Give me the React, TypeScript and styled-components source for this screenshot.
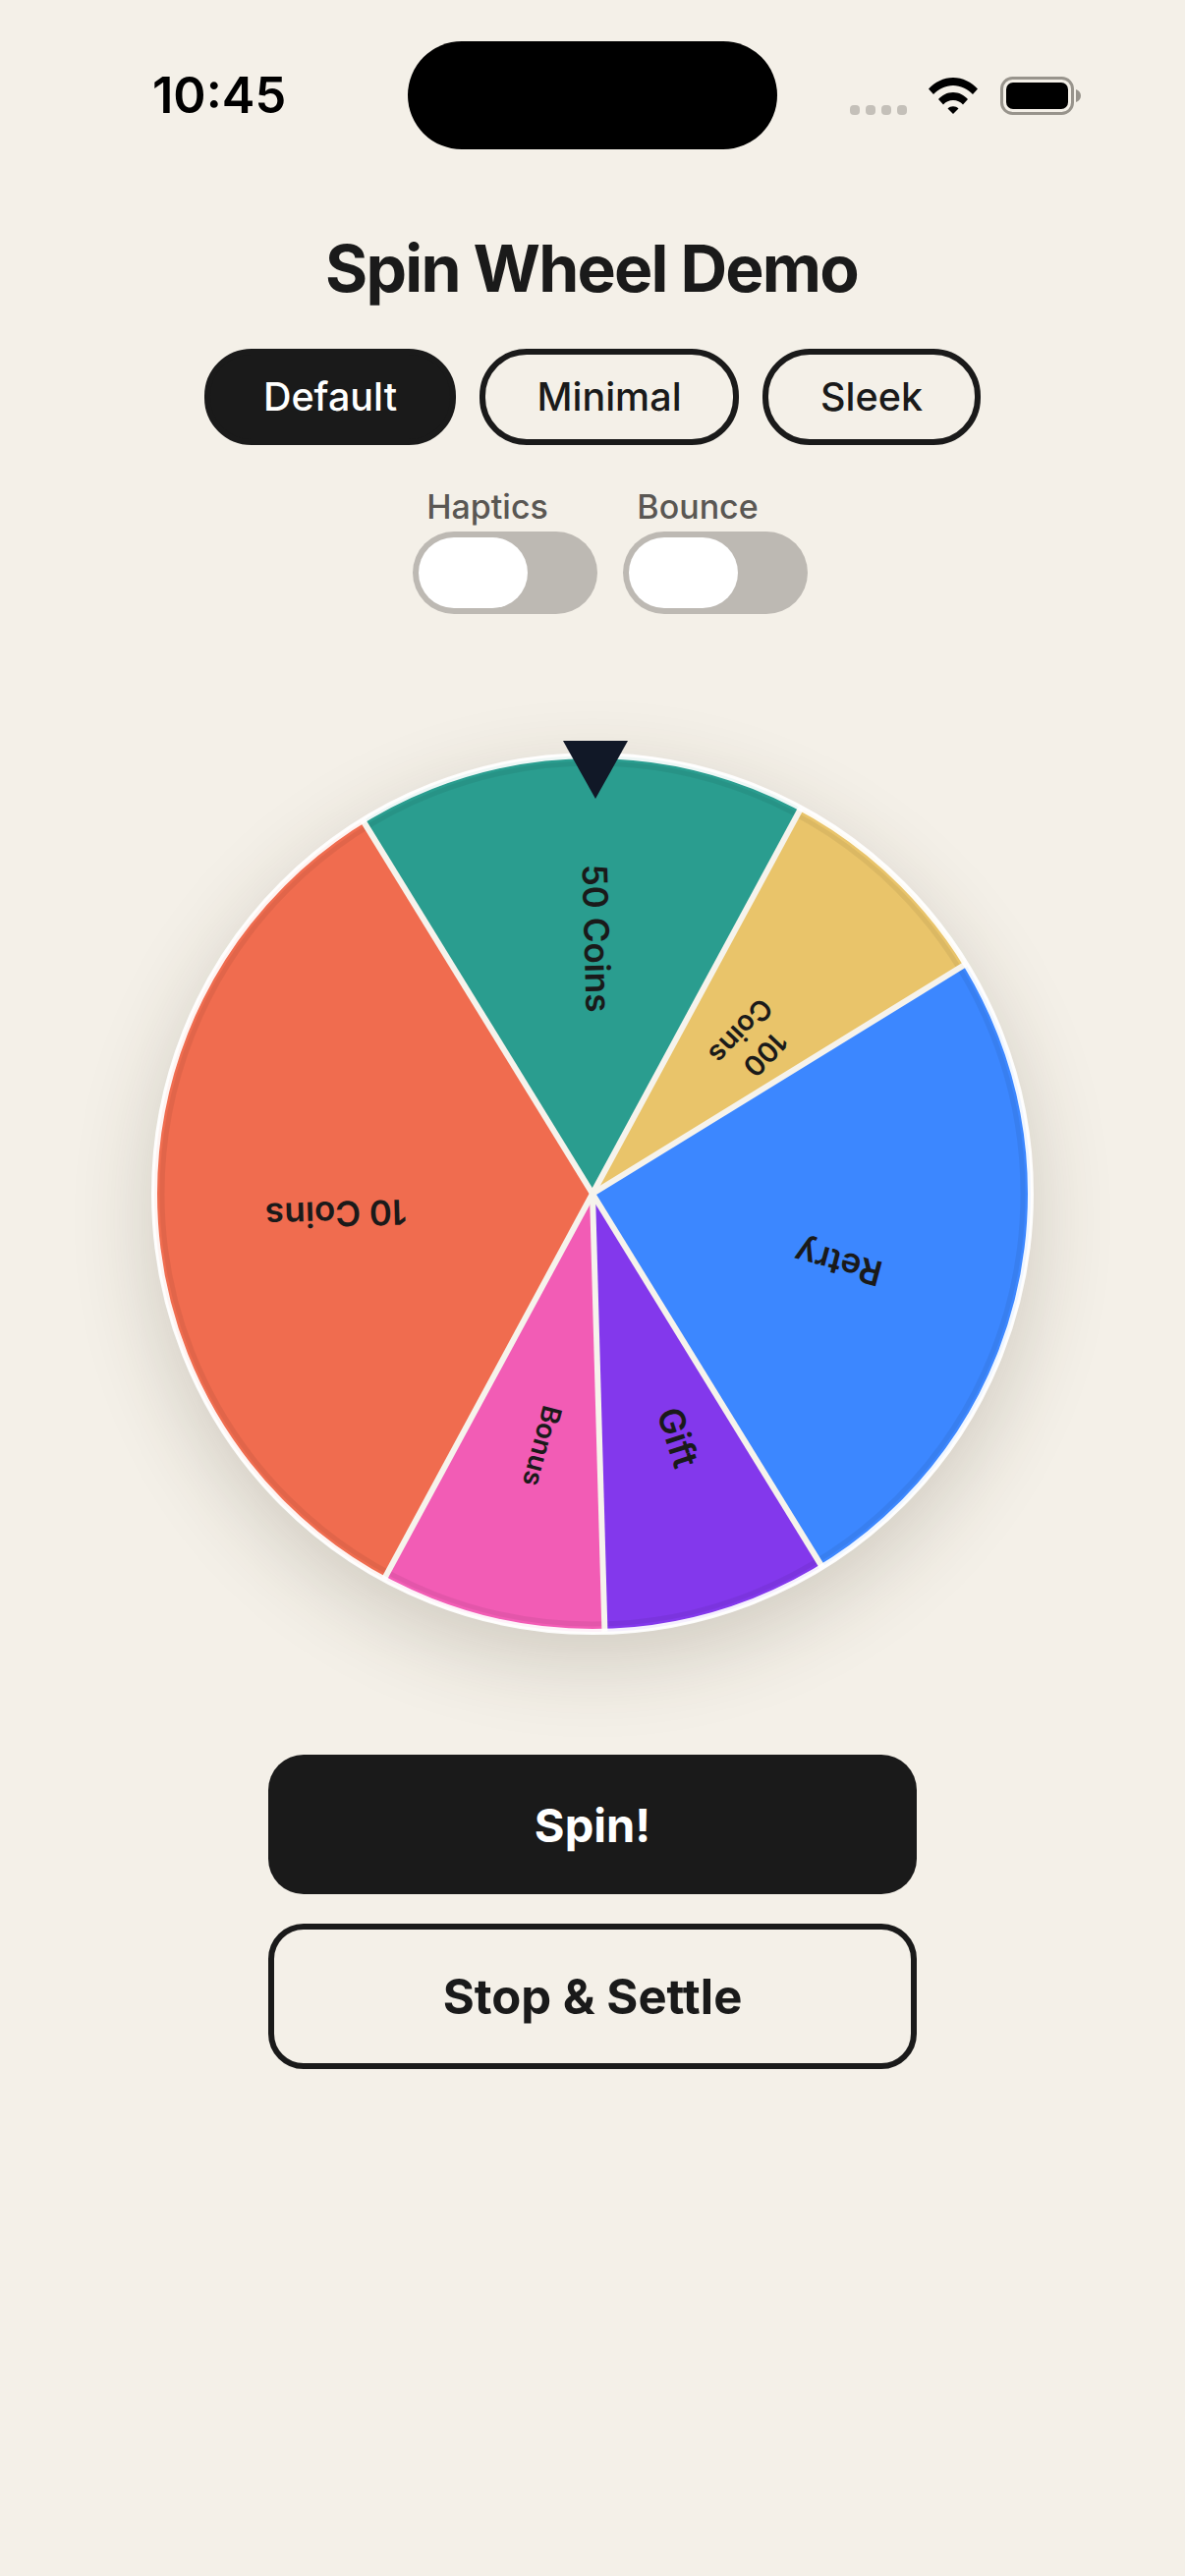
import React from "react";
import styled, { createGlobalStyle } from "styled-components";

const Global = createGlobalStyle`
  html, body { margin: 0; padding: 0; background: #f4f0e8; }
  body { font-family: Inter, "Noto Sans", sans-serif; color: #1a1a1a; }
`;

const Page = styled.div`
  width: 1206px;
  height: 2622px;
  overflow: hidden;
  background: #f4f0e8;
  display: flex;
  flex-direction: column;
  align-items: center;
`;

const StatusBar = styled.div`
  width: 100%;
  height: 110px;
  margin-top: 42px;
  display: grid;
  grid-template-columns: 415px 376px 1fr;
  align-items: center;
`;

const Time = styled.div`
  padding-left: 155px;
  font-size: 50.5px;
  font-weight: 600;
  line-height: 60px;
  color: #000;
`;

const Island = styled.div`
  height: 110px;
  border-radius: 55px;
  background: #000;
`;

const StatusIcons = styled.div`
  display: flex;
  align-items: flex-end;
  padding-left: 74px;
  height: 39px;
`;

const Dots = styled.div`
  display: flex;
  gap: 6px;
  margin-right: 22px;
`;

const Dot = styled.span`
  width: 10px;
  height: 10px;
  border-radius: 4px;
  background: #c4c0b9;
`;

const Title = styled.h1`
  margin: 86px 2px 0 0;
  font-size: 66px;
  line-height: 70px;
  font-weight: 700;
  letter-spacing: -1.8px;
  color: #1a1a1a;
`;

const PillRow = styled.div`
  display: flex;
  gap: 24px;
  margin-top: 47px;
`;

const Pill = styled.div<{ $active?: boolean; $width: number }>`
  height: 98px;
  width: ${(p) => p.$width}px;
  box-sizing: border-box;
  border: 6px solid #1a1a1a;
  border-radius: 48px;
  display: flex;
  align-items: center;
  justify-content: center;
  font-size: 39.5px;
  font-weight: 550;
  background: ${(p) => (p.$active ? "#1a1a1a" : "transparent")};
  color: ${(p) => (p.$active ? "#fff" : "#1a1a1a")};
`;

const ToggleRow = styled.div`
  display: flex;
  gap: 26px;
  margin-top: 37px;
  padding-left: 36px;
`;

const ToggleColumn = styled.div`
  width: 188px;
  display: flex;
  flex-direction: column;
  align-items: center;
`;

const ToggleLabel = styled.div`
  margin-right: 36px;
  font-size: 34px;
  line-height: 51px;
  font-weight: 500;
  color: #5a5753;
`;

const Toggle = styled.div`
  width: 188px;
  height: 84px;
  box-sizing: border-box;
  padding: 6px;
  border-radius: 42px;
  background: #bdb9b3;
`;

const Knob = styled.div`
  width: 111px;
  height: 72px;
  border-radius: 36px;
  background: #fff;
`;

const WheelWrap = styled.div`
  position: relative;
  width: 896px;
  height: 896px;
  margin-top: 142px;
  border-radius: 50%;
  box-shadow: 0 26px 84px rgba(60, 50, 30, 0.2);
`;

const WheelSvg = styled.svg`
  display: block;
  width: 896px;
  height: 896px;
  overflow: visible;
`;

const WheelLabel = styled.text`
  font-family: Inter, sans-serif;
  font-weight: 600;
  fill: #1a1a1a;
  text-anchor: middle;
  dominant-baseline: central;
`;

const Pointer = styled.svg`
  position: absolute;
  left: 418px;
  top: -13px;
  width: 66px;
  height: 59px;
`;

const ActionStack = styled.div`
  display: flex;
  flex-direction: column;
  gap: 30px;
  margin-top: 123px;
  width: 660px;
`;

const ActionButton = styled.div<{ $primary?: boolean }>`
  height: ${(p) => (p.$primary ? 142 : 148)}px;
  box-sizing: border-box;
  border-radius: 36px;
  border: ${(p) => (p.$primary ? "none" : "6px solid #1a1a1a")};
  background: ${(p) => (p.$primary ? "#1a1a1a" : "transparent")};
  color: ${(p) => (p.$primary ? "#fff" : "#1a1a1a")};
  display: flex;
  align-items: center;
  justify-content: center;
  font-size: ${(p) => (p.$primary ? 47 : 49)}px;
  font-weight: 700;
`;

const R = 446;
const C = 448;
const OFFSET = -1.6;

const polar = (deg: number, r: number) => {
  const a = ((deg + OFFSET - 90) * Math.PI) / 180;
  return [C + r * Math.cos(a), C + r * Math.sin(a)];
};

const segments = [
  { from: -30, to: 30, color: "#2a9d8f" },
  { from: 30, to: 60, color: "#e9c46a" },
  { from: 60, to: 150, color: "#3c87ff" },
  { from: 150, to: 180, color: "#8338ec" },
  { from: 180, to: 210, color: "#f25cb5" },
  { from: 210, to: 330, color: "#f06c4f" },
];

const labels = [
  { lines: ["50 Coins"], x: 452.5, y: 188, rot: 88.4, size: 35 },
  { lines: ["100", "Coins"], x: 612, y: 295, rot: 133.4, size: 28.5 },
  { lines: ["Retry"], x: 698, y: 519, rot: 195, size: 35 },
  { lines: ["Gift"], x: 535, y: 696, rot: 72, size: 36 },
  { lines: ["Bonus"], x: 397, y: 705, rot: 105, size: 27.5 },
  { lines: ["10 Coins"], x: 187, y: 469, rot: 178.4, size: 35 },
];

const wedge = (from: number, to: number) => {
  const [x1, y1] = polar(from, R);
  const [x2, y2] = polar(to, R);
  return `M${C} ${C}L${x1} ${y1}A${R} ${R} 0 ${to - from > 180 ? 1 : 0} 1 ${x2} ${y2}Z`;
};

const Wifi = () => (
  <svg width="50" height="37" viewBox="0 0 50 37" style={{ marginRight: 23, marginBottom: 1 }}>
    <path d="M0 11.5C6.5 4.5 15.2 0 25 0s18.5 4.5 25 11.5l-5 5.5C39.5 11.5 32.7 8 25 8S10.5 11.5 5 17z" fill="#000" />
    <path d="M10 22C13.8 17.8 19 15 25 15s11.2 2.8 15 7l-5 5.5C32.5 24.7 29 23 25 23s-7.5 1.7-10 4.5z" fill="#000" />
    <path d="M19.5 31.5C21 30 22.9 29.2 25 29.2s4 .8 5.5 2.3L25 37z" fill="#000" />
  </svg>
);

const Battery = () => (
  <svg width="83" height="39" viewBox="0 0 83 39">
    <rect x="1.5" y="1.5" width="72" height="36" rx="11" fill="none" stroke="#98948c" strokeWidth="3" />
    <rect x="6" y="6" width="63" height="27" rx="7" fill="#000" />
    <path d="M77 13c3 1 5 3.5 5 6.5s-2 5.5-5 6.5z" fill="#98948c" />
  </svg>
);

export default function App() {
  return (
    <Page>
      <Global />
      <StatusBar>
        <Time>10:45</Time>
        <Island />
        <StatusIcons>
          <Dots>
            <Dot />
            <Dot />
            <Dot />
            <Dot />
          </Dots>
          <Wifi />
          <Battery />
        </StatusIcons>
      </StatusBar>
      <Title>Spin Wheel Demo</Title>
      <PillRow>
        <Pill $active $width={256}>Default</Pill>
        <Pill $width={264}>Minimal</Pill>
        <Pill $width={222}>Sleek</Pill>
      </PillRow>
      <ToggleRow>
        <ToggleColumn>
          <ToggleLabel>Haptics</ToggleLabel>
          <Toggle><Knob /></Toggle>
        </ToggleColumn>
        <ToggleColumn>
          <ToggleLabel>Bounce</ToggleLabel>
          <Toggle><Knob /></Toggle>
        </ToggleColumn>
      </ToggleRow>
      <WheelWrap>
        <WheelSvg viewBox="0 0 896 896">
          {segments.map((s) => (
            <path key={s.from} d={wedge(s.from, s.to)} fill={s.color} />
          ))}
          <circle cx={C} cy={C} r={438} fill="none" stroke="rgba(0,0,0,0.06)" strokeWidth="5" />
          {segments.map((s) => {
            const [x, y] = polar(s.from, R);
            return <line key={s.from} x1={C} y1={C} x2={x} y2={y} stroke="#f6f3ec" strokeWidth="6" />;
          })}
          <circle cx={C} cy={C} r={R} fill="none" stroke="#fff" strokeWidth="6" opacity="0.92" />
          {labels.map((l) => (
            <WheelLabel key={l.lines[0]} fontSize={l.size} transform={`translate(${l.x} ${l.y}) rotate(${l.rot})`}>
              {l.lines.map((line, i) => (
                <tspan key={line} x="0" y={(i - (l.lines.length - 1) / 2) * l.size * 1.2}>
                  {line}
                </tspan>
              ))}
            </WheelLabel>
          ))}
        </WheelSvg>
        <Pointer viewBox="0 0 66 59">
          <path d="M0 0H66L33 59Z" fill="#111827" />
        </Pointer>
      </WheelWrap>
      <ActionStack>
        <ActionButton $primary>Spin!</ActionButton>
        <ActionButton>Stop &amp; Settle</ActionButton>
      </ActionStack>
    </Page>
  );
}
